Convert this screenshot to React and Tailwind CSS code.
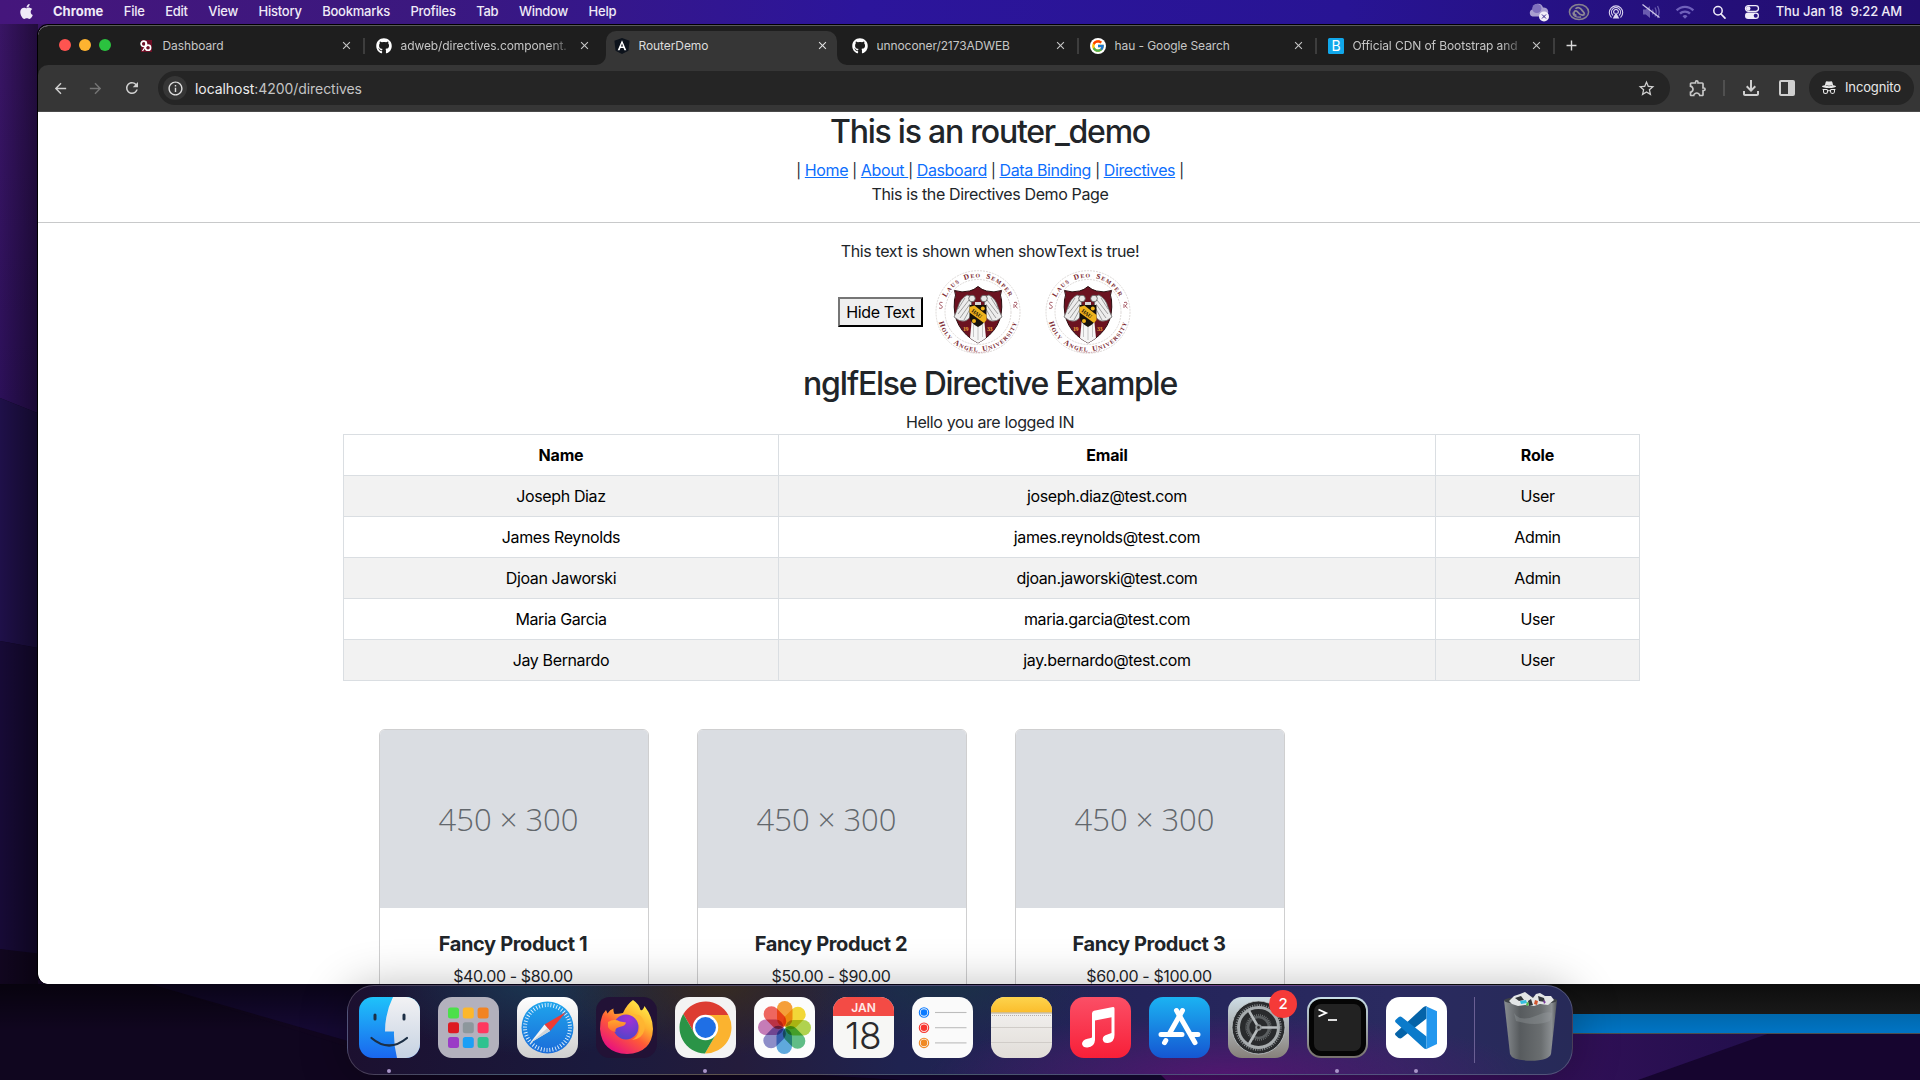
import React from "react";
import { FaApple, FaGithub } from "react-icons/fa";
import { FcGoogle } from "react-icons/fc";
import { BsIncognito } from "react-icons/bs";
import {
  MdAdd,
  MdArrowBack,
  MdArrowForward,
  MdClose,
  MdInfoOutline,
  MdOutlineExtension,
  MdOutlineFileDownload,
  MdRefresh,
  MdStarBorder,
  MdWifi,
} from "react-icons/md";

/* ---------------------------------------------------------------- desktop */

function Wallpaper() {
  return (
    <svg className="absolute inset-0" width="1920" height="1080" viewBox="0 0 1920 1080">
      <defs>
        <linearGradient id="wpTop" x1="0" y1="0" x2="0" y2="400" gradientUnits="userSpaceOnUse">
          <stop offset="0" stopColor="#3a1566" />
          <stop offset="1" stopColor="#2c1058" />
        </linearGradient>
        <linearGradient id="wpShade" x1="0" y1="0" x2="38" y2="0" gradientUnits="userSpaceOnUse">
          <stop offset="0" stopColor="#000" stopOpacity="0" />
          <stop offset="1" stopColor="#000" stopOpacity="0.42" />
        </linearGradient>
        <linearGradient id="wpUnder" x1="0" y1="984" x2="0" y2="1030" gradientUnits="userSpaceOnUse">
          <stop offset="0" stopColor="#000" stopOpacity="0.55" />
          <stop offset="1" stopColor="#000" stopOpacity="0" />
        </linearGradient>
        <linearGradient id="wpPurple" x1="1160" y1="0" x2="1800" y2="0" gradientUnits="userSpaceOnUse">
          <stop offset="0" stopColor="#4a0f66" />
          <stop offset="0.5" stopColor="#38105c" />
          <stop offset="1" stopColor="#1f0f4a" />
        </linearGradient>
      </defs>
      <rect width="1920" height="1080" fill="#10061f" />
      <path d="M0 0H60V422L0 398Z" fill="url(#wpTop)" />
      <path d="M0 398L60 422V652L0 641Z" fill="#1f1049" />
      <path d="M0 641L60 652V960L0 949Z" fill="#170a36" />
      <path d="M0 949L60 956L400 1056V1080H0Z" fill="#11061f" />
      <path d="M150 984H1300V1080H900L400 1056Z" fill="#150933" />
      <path d="M150 984L345 1046L900 1080H0V984Z" fill="#10061f" />
      <path d="M1160 1074L1400 984H1920V1080H1166Z" fill="url(#wpPurple)" />
      <path d="M1638 1080L1790 1026H1920V1080Z" fill="#16052f" />
      <rect y="24" width="38" height="960" fill="url(#wpShade)" />
      <rect y="984" width="1560" height="50" fill="url(#wpUnder)" />
    </svg>
  );
}

/* --------------------------------------------------------------- menu bar */

const menus = ["File", "Edit", "View", "History", "Bookmarks", "Profiles", "Tab", "Window", "Help"];

function StatusIcon({ children, className }) {
  return (
    <svg className={className} width="22" height="22" viewBox="0 0 22 22" fill="none">
      {children}
    </svg>
  );
}

function MenuBar() {
  return (
    <header className="relative flex h-6 shrink-0 items-center bg-[linear-gradient(90deg,#45167c_0%,#3b187f_22%,#2c159b_45%,#281494_70%,#240f78_90%,#230e70_100%)] pl-[18px] pr-[18px] text-[13px] font-medium tracking-[-0.24px] text-[#efeaf7]">
      <FaApple className="-mt-0.5 mr-[18px] text-[17px]" />
      <nav className="flex flex-1 items-center gap-[20.500px] whitespace-nowrap">
        <span className="font-bold tracking-normal">Chrome</span>
        {menus.map((m) => (
          <span key={m}>{m}</span>
        ))}
      </nav>
      <div className="flex items-center">
        <StatusIcon className="mr-[18px]">
          <path d="M4.5 15.5a3.7 3.7 0 0 1 .3-7.2A5.2 5.2 0 0 1 15 6.600a4.300 4.300 0 0 1 1.500 8.900z" fill="#a99fd0" />
          <circle cx="8.800" cy="7.500" r="4.600" fill="#7f70bd" />
          <circle cx="16" cy="15.500" r="5" fill="#f1eef8" />
          <path d="M14 13.500l4 4M18 13.500l-4 4" stroke="#30208a" strokeWidth="1" />
        </StatusIcon>
        <StatusIcon className="mr-[15px]">
          <ellipse cx="11" cy="11" rx="9.600" ry="7.500" fill="#2f1f80" stroke="#87828f" strokeWidth="1.500" />
          <path d="M16.500 13.500c-3 1.800-5.200-.5-6.600-2.300-1.300-1.700-3-1.500-3.700-.3-.8 1.500.3 3.400 2.300 3.400" stroke="#8f8a96" strokeWidth="1.700" />
          <path d="M7.500 7.800c2-2.300 5-1 6.300 1.200.9 1.600 2.600 2 2.700 4.500" stroke="#8f8a96" strokeWidth="1.700" />
          <path d="M5 11.500c0 4 4 5.200 8 4.500" stroke="#8f8a96" strokeWidth="1.300" />
        </StatusIcon>
        <StatusIcon className="mr-[13px]">
          <g stroke="#d9d3ee" strokeWidth="1.100" strokeLinecap="round">
            <path d="M6.200 16.200a6.700 6.700 0 1 1 9.600 0" />
            <path d="M7.700 14.200a4.500 4.500 0 1 1 6.600 0" />
            <path d="M9.300 12.400a2.300 2.300 0 1 1 3.400 0" />
          </g>
          <path d="M11 11.300l3.300 6.200H7.700z" fill="#d9d3ee" />
        </StatusIcon>
        <StatusIcon className="mr-[13px]">
          <path d="M3 8.500h2.800L10 5v12l-4.200-3.500H3z" fill="#6a5cb0" />
          <path d="M12.500 8.500q1.300 2.500 0 5M15 6.500q2.400 4.500 0 9M17.500 5q3.300 6 0 12" stroke="#6a5cb0" strokeWidth="1.300" />
          <path d="M2.500 3.500l17 13" stroke="#cfc8ea" strokeWidth="1.300" />
        </StatusIcon>
        <MdWifi className="mr-[13px] text-[20px] text-[#6f60bb]" />
        <StatusIcon className="mr-[11px]">
          <circle cx="10" cy="9.800" r="4.200" stroke="#f0ecf9" strokeWidth="1.500" />
          <path d="M13 13l4 4.200" stroke="#f0ecf9" strokeWidth="1.700" strokeLinecap="round" />
        </StatusIcon>
        <StatusIcon className="mr-[13px]">
          <rect x="4.500" y="4.700" width="13" height="5.600" rx="2.800" stroke="#f0ecf9" strokeWidth="1.300" />
          <circle cx="7.300" cy="7.500" r="2.200" fill="#f0ecf9" />
          <rect x="4" y="11.600" width="14" height="6.400" rx="3.200" fill="#f0ecf9" />
          <circle cx="14.700" cy="14.800" r="2" fill="#2a1488" />
        </StatusIcon>
        <span className="whitespace-nowrap tracking-[-0.04px]">Thu Jan 18</span>
        <span className="ml-2 whitespace-nowrap tracking-[-0.18px]">9:22 AM</span>
      </div>
    </header>
  );
}

/* ----------------------------------------------------------- browser tabs */

function DashboardIcon() {
  return (
    <svg width="12" height="12" viewBox="0 0 12 12" className="mx-0.5">
      <rect x="1" width="11" height="12" fill="#6d0f26" />
      <circle cx="3.800" cy="3.800" r="2.700" fill="none" stroke="#fff" strokeWidth="1.700" />
      <circle cx="8" cy="7.700" r="2.600" fill="none" stroke="#fff" strokeWidth="1.600" />
      <path d="M5.500 6.500L2.500 11M5.800 1v6" stroke="#fff" strokeWidth="1.300" />
    </svg>
  );
}

function AngularIcon() {
  return (
    <svg width="16" height="16" viewBox="0 0 16 16">
      <path d="M8 0l7.600 2.700-1.200 10L8 16l-6.400-3.300L.4 2.700z" fill="#0c121b" />
      <path d="M8 2.300L3.700 12.300h1.900l.9-2.200h3l.9 2.200h1.900L8 2.300zm0 3.300l1 2.900H7z" fill="#fff" />
    </svg>
  );
}

function BootstrapIcon() {
  return (
    <span className="flex h-4 w-4 items-center justify-center rounded-[1.500px] bg-[#11a7ea] text-[14px] leading-none text-white">
      B
    </span>
  );
}

const tabs = [
  { title: "Dashboard", icon: <DashboardIcon />, sep: true },
  { title: "adweb/directives.component.", icon: <FaGithub className="text-[16px] text-white" />, fade: true },
  { title: "RouterDemo", icon: <AngularIcon />, active: true },
  { title: "unnoconer/2173ADWEB", icon: <FaGithub className="text-[16px] text-white" />, sep: true },
  {
    title: "hau - Google Search",
    icon: (
      <span className="flex h-4 w-4 items-center justify-center rounded-full bg-white">
        <FcGoogle className="text-[14px]" />
      </span>
    ),
    sep: true,
  },
  { title: "Official CDN of Bootstrap and", icon: <BootstrapIcon />, sep: true, fade: true },
];

function Tab({ title, icon, active, sep, fade }) {
  return (
    <div className="relative flex h-full w-[238px] shrink-0 items-center pl-[11px]">
      {active && (
        <div className="absolute bottom-0 left-[3px] right-[4px] top-[5px] rounded-t-[10px] bg-[#363636]">
          <svg className="absolute -left-[10px] bottom-0" width="10" height="10" viewBox="0 0 10 10">
            <path d="M10 0V10H0A10 10 0 0 0 10 0Z" fill="#363636" />
          </svg>
          <svg className="absolute -right-[10px] bottom-0" width="10" height="10" viewBox="0 0 10 10">
            <path d="M0 0V10H10A10 10 0 0 1 0 0Z" fill="#363636" />
          </svg>
        </div>
      )}
      <div className="relative flex flex-1 items-center">
        {icon}
        <div
          className={
            "ml-[8.500px] w-[168px] overflow-hidden whitespace-nowrap text-[12px] tracking-[-0.09px] " +
            (active ? "text-[#dcdcdc] " : "text-[#c6c6c6] ") +
            (fade ? "[mask-image:linear-gradient(90deg,#000_88%,transparent_103%)]" : "")
          }
        >
          {title}
        </div>
        <MdClose className={"ml-[9px] text-[13px] " + (active ? "text-[#e3e3e3]" : "text-[#c7c7c7]")} />
      </div>
      <div className={"h-4 w-0.5 " + (sep ? "bg-[#3d3d3d]" : "")} />
    </div>
  );
}

function TabStrip() {
  return (
    <div className="flex h-[39px] shrink-0 items-center bg-[#1e1e1e] pl-[21px]">
      <div className="-mt-px mr-4 flex gap-2">
        <span className="h-3 w-3 rounded-full bg-[#ff5450]" />
        <span className="h-3 w-3 rounded-full bg-[#feb330]" />
        <span className="h-3 w-3 rounded-full bg-[#2bc23f]" />
      </div>
      {tabs.map((t) => (
        <Tab key={t.title} {...t} />
      ))}
      <MdAdd className="ml-2 text-[17px] text-[#dadada]" />
    </div>
  );
}

function Toolbar() {
  return (
    <div className="bg-[#1e1e1e]">
      <div className="flex h-[47px] items-center rounded-tl-[10px] border-b border-[#4a4a4a] bg-[#363636] pl-[14px]">
        <MdArrowBack className="text-[17px] text-[#d0d0d0]" />
        <MdArrowForward className="ml-[18px] text-[17px] text-[#757575]" />
        <MdRefresh className="ml-[19px] text-[18px] text-[#d0d0d0]" />
        <div className="ml-[17px] flex h-[34px] w-[1512px] items-center rounded-full bg-[#252525] pl-[5px] pr-[14px]">
          <span className="flex h-6 w-6 items-center justify-center rounded-full bg-[#363636]">
            <MdInfoOutline className="text-[17px] text-[#dedede]" />
          </span>
          <span className="ml-2 flex-1 text-[14px] tracking-[-0.06px] text-[#c4c4c4]">
            <span className="text-[#ececec]">localhost</span>:4200/directives
          </span>
          <MdStarBorder className="text-[19px] text-[#cfcfcf]" />
        </div>
        <MdOutlineExtension className="ml-[18px] text-[20px] text-[#c8c8c8]" />
        <span className="ml-[15px] h-4 w-0.5 bg-[#505050]" />
        <MdOutlineFileDownload className="ml-[14px] text-[24px] text-[#cfcfcf]" />
        <svg className="ml-[16px]" width="16" height="16" viewBox="0 0 16 16">
          <rect x="1" y="1" width="14" height="14" rx="1" fill="none" stroke="#cfcfcf" strokeWidth="2" />
          <rect x="9" y="1" width="6" height="14" fill="#cfcfcf" />
        </svg>
        <div className="ml-[14px] flex h-[34px] w-[105px] shrink-0 items-center rounded-full bg-[#252525] pl-3">
          <BsIncognito className="text-[16px] text-[#e6e6e6]" />
          <span className="ml-[8px] text-[13px] tracking-[-0.13px] text-[#e8e8e8]">Incognito</span>
        </div>
      </div>
    </div>
  );
}

/* --------------------------------------------------------------- web page */

function Seal({ id }) {
  return (
    <svg width="86" height="84" viewBox="0 0 86 84" preserveAspectRatio="none">
      <defs>
        <path id={id + "t"} d="M8 42a35 34.500 0 0 1 70 0" />
        <path id={id + "b"} d="M2.500 42a40.500 39.500 0 0 0 81 0" />
      </defs>
      <ellipse cx="43" cy="42" rx="42" ry="41.300" fill="#fff" stroke="#cfc8c6" strokeWidth="0.700" strokeDasharray="2 1" />
      <ellipse cx="43" cy="42" rx="33" ry="32.500" fill="none" stroke="#cfc8c6" strokeWidth="0.700" strokeDasharray="2 1" />
      <g fill="#7a1f2e" fontFamily="'Liberation Serif', serif" fontWeight="bold">
        <text fontSize="5.800" letterSpacing="1.100" wordSpacing="2" textAnchor="middle">
          <textPath href={"#" + id + "t"} startOffset="50%">
            <tspan fontSize="7.500">L</tspan>AUS <tspan fontSize="7.500">D</tspan>EO <tspan fontSize="7.500">S</tspan>EMPER
          </textPath>
        </text>
        <text fontSize="5.800" letterSpacing="1" wordSpacing="2" textAnchor="middle">
          <textPath href={"#" + id + "b"} startOffset="50%">
            <tspan fontSize="7.500">H</tspan>OLY <tspan fontSize="7.500">A</tspan>NGEL <tspan fontSize="7.500">U</tspan>NIVERSITY
          </textPath>
        </text>
      </g>
      <path d="M7.500 32.500q-3-1.200-3 1.200 0 1.300 1.700 1.700 1.600.7 1 2.200-1 1.500-3.200.4" fill="none" stroke="#a8606b" strokeWidth="1" />
      <path d="M79 32.500q3-1.200 3 1.200-.2 1.300-2 2.200l2.500 2.200M79 34v4" fill="none" stroke="#a8606b" strokeWidth="1" />
      <path
        d="M43 16.500Q47 20 51.500 21Q59 23 66.500 20.500Q64.500 25 66.500 30Q69.500 59 43 73Q16.500 59 19.500 30Q21.500 25 19.500 20.500Q27 23 34.500 21Q39 20 43 16.500Z"
        fill="#6b1220"
        stroke="#2a0d10"
        strokeWidth="1"
      />
      <path d="M37 48h12l2 20q-4 3-8 5q-4-2-8-5z" fill="#f6f6f6" />
      <path d="M38.500 54v13M43 56v14M47.500 54v13" stroke="#b9b9b9" strokeWidth="0.800" />
      <path d="M32 25q-7 4-9 12q-2 6-4 10q5 5 11 4q6-2 7-10l-1-13q-1-3-4-3z" fill="#ededed" stroke="#666" strokeWidth="0.800" />
      <path d="M54 25q7 4 9 12q2 6 4 10q-5 5-11 4q-6-2-7-10l1-13q1-3 4-3z" fill="#ededed" stroke="#666" strokeWidth="0.800" />
      <path
        d="M34 30l-11 14M35 34l-10 14M35 39l-6 11M30 28l-7 11M52 30l11 14M51 34l10 14M51 39l6 11M56 28l7 11"
        stroke="#7d7d7d"
        strokeWidth="0.700"
      />
      <circle cx="37" cy="28.500" r="3.300" fill="#e9e9e9" stroke="#555" strokeWidth="0.800" />
      <circle cx="49" cy="28.500" r="3.300" fill="#e9e9e9" stroke="#555" strokeWidth="0.800" />
      <path d="M40 32h6v4h-6z" fill="#d6d6d6" />
      <path d="M34.500 35h17v13q-2 6-8.500 9q-6.500-3-8.500-9z" fill="#17120b" />
      <path d="M34.500 37l5-1.500L51.500 45v5l-2.500 3L34.500 42.500z" fill="#efb31c" />
      <circle cx="47.800" cy="38.500" r="2" fill="#efb31c" />
      <circle cx="39" cy="51" r="2" fill="#efb31c" />
      <g fontFamily="'Liberation Serif', serif" fontWeight="bold" fontSize="6">
        <text x="36" y="41.500" fontSize="5.500" fill="#17120b" transform="rotate(38 36 41.500)">
          HAU
        </text>
        <text x="28" y="61" fill="#e9a13a">
          19
        </text>
        <text x="52" y="61" fill="#e9a13a">
          33
        </text>
      </g>
      <path d="M31 80.500q12 4 24 0" fill="none" stroke="#c99aa2" strokeWidth="1" strokeDasharray="1.500 1" />
    </svg>
  );
}

function NavLink({ children }) {
  return (
    <a href="#" className="whitespace-pre text-[#0d6efd] underline">
      {children}
    </a>
  );
}

function Bar() {
  return <span className="align-[0.500px] text-[14.500px] leading-none">|</span>;
}

const people = [
  ["Joseph Diaz", "joseph.diaz@test.com", "User"],
  ["James Reynolds", "james.reynolds@test.com", "Admin"],
  ["Djoan Jaworski", "djoan.jaworski@test.com", "Admin"],
  ["Maria Garcia", "maria.garcia@test.com", "User"],
  ["Jay Bernardo", "jay.bernardo@test.com", "User"],
];

const products = [
  ["Fancy Product 1", "$40.00 - $80.00"],
  ["Fancy Product 2", "$50.00 - $90.00"],
  ["Fancy Product 3", "$60.00 - $100.00"],
];

function Page() {
  return (
    <main className="flex-1 overflow-hidden bg-white text-center text-[16px] leading-6 tracking-[-0.38px] text-[#212529]">
      <h2 className="mb-[6.600px] pt-[1.400px] text-[32px] font-medium leading-[38.4px] tracking-[-1.23px]">
        This is an router_demo
      </h2>
      <nav>
        <Bar /> <NavLink>Home</NavLink> <Bar /> <NavLink>{"About "}</NavLink>
        <Bar /> <NavLink>Dasboard</NavLink> <Bar /> <NavLink>Data Binding</NavLink> <Bar />{" "}
        <NavLink>Directives</NavLink> <Bar />
      </nav>
      <p>This is the Directives Demo Page</p>
      <hr className="my-4 border-[#c8c9ca]" />
      <p>This text is shown when showText is true!</p>
      <div className="flex h-[100px] items-center pl-[800px]">
        <button className="mt-[-2px] h-[30px] w-[85px] border-2 border-b-black border-l-[#767676] border-r-black border-t-[#767676] bg-[#efefef] leading-none text-black">
          Hide Text
        </button>
        <div className="ml-3 mt-[-2px] flex gap-6">
          <Seal id="sealA" />
          <Seal id="sealB" />
        </div>
      </div>
      <h2 className="mb-[6.600px] pt-[1.400px] text-[32px] font-medium leading-[38.4px] tracking-[-1.25px]">
        ngIfElse Directive Example
      </h2>
      <p>Hello you are logged IN</p>
      <table className="ml-[305px] w-[1296px] table-fixed border-collapse text-black">
        <colgroup>
          <col className="w-[435px]" />
          <col className="w-[657px]" />
          <col className="w-[204px]" />
        </colgroup>
        <thead>
          <tr>
            {["Name", "Email", "Role"].map((h) => (
              <th key={h} className="border border-[#dadee2] p-2 font-bold tracking-[-0.18px]">
                {h}
              </th>
            ))}
          </tr>
        </thead>
        <tbody>
          {people.map((p) => (
            <tr key={p[0]} className="odd:bg-[#f2f2f2]">
              {p.map((c) => (
                <td key={c} className="border border-[#dadee2] p-2">
                  {c}
                </td>
              ))}
            </tr>
          ))}
        </tbody>
      </table>
      <div className="ml-[341px] mt-12 flex gap-12">
        {products.map(([name, price]) => (
          <article key={name} className="h-[300px] w-[270px] overflow-hidden rounded-md border border-[#cfcfd0]">
            <div className="flex h-[178px] items-center justify-center bg-[#dadde2] pr-[11px] font-['Open_Sans',sans-serif] text-[31px] font-light tracking-[0px] text-[#62676c]">
              450 × 300
            </div>
            <div className="py-6 pl-6 pr-[26px]">
              <h5 className="mb-2 text-[20px] font-bold tracking-[-0.36px]">{name}</h5>
              <p>{price}</p>
            </div>
          </article>
        ))}
      </div>
    </main>
  );
}

/* ------------------------------------------------------------------- dock */

function Finder() {
  return (
    <>
      <defs>
        <linearGradient id="fL" x1="0" y1="0" x2="0" y2="1">
          <stop offset="0" stopColor="#1fc3fa" />
          <stop offset="1" stopColor="#1a66ee" />
        </linearGradient>
        <linearGradient id="fR" x1="0" y1="0" x2="0" y2="1">
          <stop offset="0" stopColor="#f2f2f4" />
          <stop offset="1" stopColor="#c6d2e2" />
        </linearGradient>
        <clipPath id="fC">
          <rect width="61" height="61" rx="14" />
        </clipPath>
      </defs>
      <g clipPath="url(#fC)">
        <rect width="61" height="61" fill="url(#fL)" />
        <path d="M34 0Q26 16 26 34.500H35Q34.500 48 38 61H61V0Z" fill="url(#fR)" />
        <path d="M16 18v4M45 18v4" stroke="#1c2f45" strokeWidth="3" strokeLinecap="round" />
        <path d="M12.500 41Q30 56 48 41" fill="none" stroke="#1c2f45" strokeWidth="2.200" strokeLinecap="round" />
      </g>
    </>
  );
}

const padColors = ["#4be04a", "#fdb72b", "#f28322", "#dd1b22", "#8d979c", "#ff375f", "#9a3cc6", "#1c9ff5", "#2ec28f"];

function Launchpad() {
  return (
    <>
      <rect width="61" height="61" rx="14" fill="#b3b1bd" />
      {padColors.map((c, i) => (
        <rect key={c} x={10 + (i % 3) * 14.800} y={10.500 + Math.floor(i / 3) * 14.800} width="11" height="11" rx="2.500" fill={c} />
      ))}
    </>
  );
}

function Safari() {
  return (
    <>
      <defs>
        <linearGradient id="sB" x1="0" y1="0" x2="0" y2="1">
          <stop offset="0" stopColor="#fff" />
          <stop offset="1" stopColor="#cfcfcf" />
        </linearGradient>
        <linearGradient id="sC" x1="0" y1="0" x2="0" y2="1">
          <stop offset="0" stopColor="#1fa5ec" />
          <stop offset="1" stopColor="#1b6cd9" />
        </linearGradient>
      </defs>
      <rect width="61" height="61" rx="14" fill="url(#sB)" />
      <circle cx="30.500" cy="30.500" r="26" fill="url(#sC)" />
      <circle cx="30.500" cy="30.500" r="22.500" fill="none" stroke="#e6f3fd" strokeWidth="4" strokeDasharray="0.900 2.030" />
      <path d="M49 15L27.500 27.500L33 34Z" fill="#ee3b35" />
      <path d="M13 46L27.500 27.500L33 34Z" fill="#f3f3f3" />
      <path d="M13 46L33 34L30.500 31Z" fill="#cfd5da" />
    </>
  );
}

function Firefox() {
  return (
    <>
      <defs>
        <linearGradient id="ffA" x1="0.850" y1="0.050" x2="0.250" y2="0.950">
          <stop offset="0" stopColor="#fff04a" />
          <stop offset="0.350" stopColor="#ffb02e" />
          <stop offset="0.600" stopColor="#ff5b36" />
          <stop offset="1" stopColor="#e8117f" />
        </linearGradient>
        <radialGradient id="ffB" cx="0.600" cy="0.200" r="0.900">
          <stop offset="0" stopColor="#a430d6" />
          <stop offset="1" stopColor="#4a46c8" />
        </radialGradient>
        <linearGradient id="ffC" x1="0" y1="0" x2="0" y2="1">
          <stop offset="0" stopColor="#ffa62b" />
          <stop offset="1" stopColor="#ff6a33" />
        </linearGradient>
      </defs>
      <rect width="61" height="61" rx="14" fill="#221236" />
      <path
        d="M37 3Q43 7 44.500 13Q47 14 48.500 9Q57 20 57 32Q56 56 31 57Q6 56 4 32Q4 19 10 13L11.500 16.500Q14 12.500 17.500 11.500Q17 14 18.500 17Q23 17 27 16Q31 7 37 3Z"
        fill="url(#ffA)"
      />
      <circle cx="30" cy="30" r="12.500" fill="url(#ffB)" />
      <path d="M12 25Q18 21.500 24 24.500L30 25.500Q29.500 29 23.500 30Q18.500 31 19.500 35Q14 34 12 30Z" fill="url(#ffC)" />
      <path d="M36 17Q45 22 43.500 33Q42 40 36 43Q46 42 48.500 33Q50 22 43 18Z" fill="#ffb531" opacity="0.850" />
    </>
  );
}

function Chrome() {
  return (
    <>
      <rect width="61" height="61" rx="14" fill="#f3f3f3" />
      <g transform="translate(30.500 30.500)">
        <path d="M-22.200 -13.500A26 26 0 0 1 22.800 -12.500L0 -12.500L-10.800 6.250Z" fill="#dd3c31" />
        <path d="M22.800 -12.500A26 26 0 0 1 -.6 26L10.800 6.250L0 -12.500Z" fill="#fbb32f" />
        <path d="M-.6 26A26 26 0 0 1 -22.200 -13.500L-10.800 6.250L10.800 6.250Z" fill="#2a9447" />
        <circle r="12.700" fill="#fff" />
        <circle r="10.400" fill="#1f6fe5" />
      </g>
    </>
  );
}

const petals = ["#f7941d", "#f4d51c", "#a8cf38", "#4bb777", "#4a9fdc", "#7f7fc4", "#c16bb0", "#f0524a"];

function Photos() {
  return (
    <>
      <rect width="61" height="61" rx="14" fill="#fcfcfc" />
      {petals.map((c, i) => (
        <rect
          key={c}
          x="23"
          y="4"
          width="15.500"
          height="25.500"
          rx="7.700"
          fill={c}
          opacity="0.880"
          className="mix-blend-multiply"
          transform={"rotate(" + i * 45 + " 30.500 30.500)"}
        />
      ))}
    </>
  );
}

function Calendar() {
  return (
    <>
      <defs>
        <clipPath id="calC">
          <rect width="61" height="61" rx="14" />
        </clipPath>
      </defs>
      <g clipPath="url(#calC)">
        <rect width="61" height="61" fill="#f7f7f5" />
        <rect width="61" height="19" fill="#f34b45" />
      </g>
      <text x="30.500" y="15" textAnchor="middle" fontFamily="Inter, sans-serif" fontWeight="600" fontSize="12" fill="#ffe9e7">
        JAN
      </text>
      <text x="30" y="51.500" textAnchor="middle" fontFamily="Inter, sans-serif" fontWeight="300" fontSize="37" letterSpacing="-0.500" fill="#2a2a2c">
        18
      </text>
    </>
  );
}

function Reminders() {
  return (
    <>
      <rect width="61" height="61" rx="14" fill="#fafafa" />
      {["#0a7aff", "#f8352f", "#f08a24"].map((c, i) => (
        <g key={c} transform={"translate(12 " + (15.500 + i * 15.200) + ")"}>
          <circle r="4.700" fill="none" stroke={c} strokeWidth="1.100" />
          <circle r="3.300" fill={c} />
          <path d="M11 0H42.500" stroke="#bcbcbc" strokeWidth="1.100" />
        </g>
      ))}
    </>
  );
}

function Notes() {
  return (
    <>
      <defs>
        <linearGradient id="nB" x1="0" y1="0" x2="0" y2="1">
          <stop offset="0" stopColor="#f6f5f4" />
          <stop offset="1" stopColor="#e1ddd8" />
        </linearGradient>
        <linearGradient id="nT" x1="0" y1="0" x2="0" y2="1">
          <stop offset="0" stopColor="#fdd44d" />
          <stop offset="1" stopColor="#fbbd2c" />
        </linearGradient>
        <clipPath id="nC">
          <rect width="61" height="61" rx="14" />
        </clipPath>
      </defs>
      <g clipPath="url(#nC)">
        <rect width="61" height="61" fill="url(#nB)" />
        <rect width="61" height="15.500" fill="url(#nT)" />
        <path d="M0 16H61" stroke="#b3a588" strokeWidth="1" />
        <path d="M1 18.500H61" stroke="#b5b0aa" strokeWidth="1" strokeDasharray="1 1" />
        <path d="M0 30.500H61M0 45.500H61" stroke="#d0ccc8" strokeWidth="1" />
      </g>
    </>
  );
}

function Music() {
  return (
    <>
      <defs>
        <linearGradient id="mB" x1="0" y1="0" x2="0" y2="1">
          <stop offset="0" stopColor="#fb4f66" />
          <stop offset="1" stopColor="#f81f38" />
        </linearGradient>
      </defs>
      <rect width="61" height="61" rx="14" fill="url(#mB)" />
      <path
        d="M43 10L24 13.800Q22 14.200 22 16.500V40.500Q20 41.200 17.500 41.700Q12 43 12 47Q13 50.800 17.500 50.500Q24.500 50 25 43V23.500L41.500 20.200V36Q39.500 37 37.500 37.400Q32.500 38.500 32.700 42.500Q33.500 46.500 38 46Q44.500 45 44.500 38V11.500Q44.500 9.700 43 10Z"
        fill="#fff"
      />
    </>
  );
}

function AppStore() {
  return (
    <>
      <defs>
        <linearGradient id="aB" x1="0" y1="0" x2="0" y2="1">
          <stop offset="0" stopColor="#1bb3f2" />
          <stop offset="1" stopColor="#1556d2" />
        </linearGradient>
      </defs>
      <rect width="61" height="61" rx="14" fill="url(#aB)" />
      <g stroke="#fff" strokeWidth="5" strokeLinecap="round">
        <path d="M33.500 13.500L20.500 36.500M16.800 43.500L15.500 45.700" />
        <path d="M27.500 13.500L46 45.700" />
        <path d="M12 37.500H33M43.500 37.500H49" />
      </g>
    </>
  );
}

function Settings() {
  return (
    <>
      <defs>
        <linearGradient id="stB" x1="0" y1="0" x2="0" y2="1">
          <stop offset="0" stopColor="#cfdee6" />
          <stop offset="1" stopColor="#86807a" />
        </linearGradient>
      </defs>
      <rect width="61" height="61" rx="14" fill="url(#stB)" />
      <g transform="translate(30.500 30.500)" fill="none">
        <circle r="26.500" fill="#292b2d" />
        <circle r="26.500" stroke="#c4cacd" strokeWidth="0.800" />
        <circle r="22.300" stroke="#8d9295" strokeWidth="2" strokeDasharray="1 1.330" />
        <circle r="20" stroke="#a7acae" strokeWidth="3" />
        <circle r="12.500" stroke="#6f7375" strokeWidth="1.500" strokeDasharray="1 1" />
        <circle r="10.500" stroke="#5b5f61" strokeWidth="2.600" />
        <path d="M0 0L19 0M0 0L-9.500 -16.500M0 0L-9.500 16.500" stroke="#b6bbbd" strokeWidth="2.600" />
        <circle r="3.200" fill="#8f9496" />
        <circle r="1.400" fill="#333" />
      </g>
    </>
  );
}

function Terminal() {
  return (
    <>
      <defs>
        <linearGradient id="tB" x1="0" y1="0" x2="0" y2="1">
          <stop offset="0" stopColor="#c9dfe9" />
          <stop offset="1" stopColor="#77716d" />
        </linearGradient>
      </defs>
      <rect width="61" height="61" rx="14" fill="url(#tB)" />
      <rect x="2" y="2" width="57" height="57" rx="12" fill="#050505" />
      <rect x="7" y="7" width="47" height="47" rx="7" fill="#222" />
      <path d="M11.500 12.500L19 16L11.500 19.500" fill="none" stroke="#fff" strokeWidth="1.900" />
      <path d="M21 23H30" stroke="#fff" strokeWidth="1.700" />
    </>
  );
}

function VSCode() {
  return (
    <>
      <rect width="61" height="61" rx="14" fill="#fff" />
      <path d="M9.500 36Q8.500 37 9.500 38.200L12.500 41Q14.500 42 16 40.700L40.500 21.500V9Q38.500 9 37 10.500Z" fill="#0563a8" />
      <path d="M12.500 20.200Q14.500 19 16 20.300L40.500 39.500V52Q38.500 52 37 50.500L9.500 25.200Q8.500 24 9.500 23Z" fill="#0b7bcb" />
      <path d="M40 9.200L51 14.200V47L40 52.200Q41 50 40.500 47V14Q41 11 40 9.200Z" fill="#2397ee" />
    </>
  );
}

function Trash() {
  return (
    <>
      <defs>
        <linearGradient id="trB" x1="0" y1="0" x2="1" y2="0">
          <stop offset="0" stopColor="#8a8e92" />
          <stop offset="0.300" stopColor="#575b5e" />
          <stop offset="0.700" stopColor="#6a6e70" />
          <stop offset="0.900" stopColor="#8b8f92" />
          <stop offset="1" stopColor="#505357" />
        </linearGradient>
      </defs>
      <path d="M4 3H57L51 57Q49 63.500 30.500 63.800Q12 63.500 10 57Z" fill="url(#trB)" />
      <ellipse cx="30.500" cy="3.500" rx="26.500" ry="4" fill="#3f4347" />
      <path d="M9 4L14 -1L20 -3L25 -5L29 -2L33 1L36 -3L40 -4L45 -1L51 -1L54 3L48 8L40 7L34 9L25 8L18 9L12 7Z" fill="#e3e5e6" />
      <path d="M15 1l6-2 3 4-5 1zM38-1l6 2 1 4-6-1zM28 4l3-2 2 6-4 1z" fill="#33373b" />
      <path d="M20 4l6-1 1 3-6 1z" fill="#35bfe0" />
      <path d="M35 3l3 1-1 4-3-1z" fill="#d0562f" />
      <path d="M27 5l2 1-1 3-2-1z" fill="#4fbf4c" />
      <path d="M43 3l3 2-2 2z" fill="#7a3a9c" />
      <path d="M14 16Q20 26 38 18Q46 14 52 16L50 24Q36 30 16 24Z" fill="#9aa0a3" opacity="0.350" />
    </>
  );
}

const dock = [
  { Icon: Finder, running: true },
  { Icon: Launchpad },
  { Icon: Safari },
  { Icon: Firefox },
  { Icon: Chrome, running: true },
  { Icon: Photos },
  { Icon: Calendar },
  { Icon: Reminders },
  { Icon: Notes },
  { Icon: Music },
  { Icon: AppStore },
  { Icon: Settings, badge: "2" },
  { Icon: Terminal, running: true },
  { Icon: VSCode, running: true },
];

function DockItem({ Icon, running, badge }) {
  return (
    <div className="relative flex flex-col items-center">
      <svg className="isolate overflow-visible" width="61" height="61" viewBox="0 0 61 61">
        <Icon />
      </svg>
      {running && <span className="mr-[2px] mt-[11px] h-1 w-1 rounded-full bg-[#a995c9]" />}
      {badge && (
        <span className="absolute -right-2 -top-[7px] flex h-7 w-7 items-center justify-center rounded-full bg-[#f53a38] text-[15px] font-medium text-white">
          {badge}
        </span>
      )}
    </div>
  );
}

function Dock() {
  return (
    <div className="absolute inset-x-0 bottom-[5px] flex justify-center">
      <div className="flex h-[90px] items-start gap-[18px] rounded-[27px] border border-white/20 bg-[radial-gradient(ellipse_160px_70px_at_370px_0,#362b22_0%,transparent_100%),radial-gradient(ellipse_300px_60px_at_880px_100%,#50176f_0%,transparent_100%),radial-gradient(ellipse_150px_60px_at_600px_0,#1b3047_0%,transparent_100%),radial-gradient(ellipse_170px_70px_at_190px_0,#1b3550_0%,transparent_100%),linear-gradient(90deg,#1c1030_0%,#1a1a3d_20%,#241c3c_32%,#1f2350_45%,#24245a_65%,#2a2a60_85%,#272a58_100%)] px-[11px] pt-[11px] shadow-[0_4px_48px_rgba(0,0,0,0.300)]">
        {dock.map((d) => (
          <DockItem key={d.Icon.name} {...d} />
        ))}
        <span className="ml-[9px] h-[66px] w-px bg-[#6a5f93]" />
        <svg className="ml-[7px] overflow-visible" width="61" height="61" viewBox="0 0 61 61">
          <Trash />
        </svg>
      </div>
    </div>
  );
}

/* -------------------------------------------------------------------- app */

export default function App() {
  return (
    <div className="relative flex h-[1080px] w-[1920px] flex-col overflow-hidden bg-[#10061f] font-[Inter,sans-serif]">
      <Wallpaper />
      <div className="absolute left-[1200px] top-[960px] h-[74px] w-[720px] border-b border-[#4d4d4d] bg-[linear-gradient(#0d0d0d_0,#0d0d0d_24px,#191919_54px,#0068ad_54px,#0074c4_100%)]" />
      <MenuBar />
      <section className="relative ml-[37px] flex h-[960px] w-[1906px] shrink-0 flex-col overflow-hidden rounded-[11px] border border-b-0 border-black">
        <div className="flex flex-1 flex-col overflow-hidden rounded-[10px] border-t border-[#5a5a5a] bg-white">
          <TabStrip />
          <Toolbar />
          <Page />
        </div>
      </section>
      <Dock />
    </div>
  );
}
